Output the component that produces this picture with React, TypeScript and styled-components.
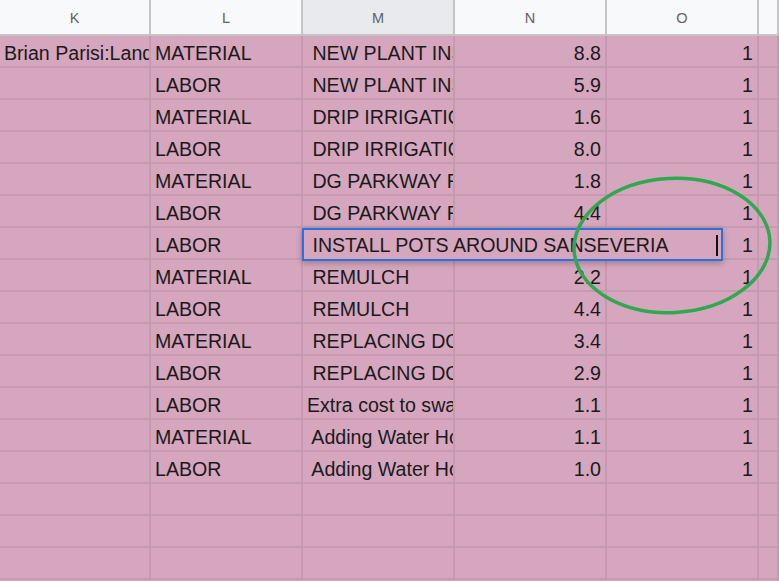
import React from "react";
import styled, { createGlobalStyle } from "styled-components";

const Global = createGlobalStyle`
  html, body { margin: 0; padding: 0; background: #d5a6bd; overflow: hidden; }
  body { font-family: "Liberation Sans", Arial, sans-serif; }
`;

const COLS = "151px 152px 152px 152px 152px 1fr";

const Sheet = styled.div`
  position: relative;
  width: 779px;
  height: 581px;
  overflow: hidden;
  background: #d5a6bd;
`;

const HeaderRow = styled.div`
  display: grid;
  grid-template-columns: ${COLS};
  height: 36px;
  box-sizing: border-box;
  border-bottom: 2px solid #c4c4c4;
  background: #f8f9fa;
`;

const HeaderCell = styled.div<{ $active?: boolean }>`
  display: flex;
  align-items: center;
  justify-content: center;
  box-sizing: border-box;
  border-right: 2px solid #c4c4c4;
  background: ${(p) => (p.$active ? "#e8eaed" : "#f8f9fa")};
  color: #5f6368;
  font-size: 14.5px;
  padding-top: 1px;
`;

const Row = styled.div`
  display: grid;
  grid-template-columns: ${COLS};
  height: 32px;
  box-sizing: border-box;
  border-bottom: 2px solid #c599af;
`;

const Cell = styled.div<{ $align?: "left" | "right" }>`
  box-sizing: border-box;
  border-right: 2px solid #c599af;
  display: flex;
  align-items: center;
  justify-content: ${(p) => (p.$align === "right" ? "flex-end" : "flex-start")};
  padding: 4px ${(p) => (p.$align === "right" ? "4px" : "0")} 0 ${(p) => (p.$align === "right" ? "0" : "4px")};
  font-size: 19.6px;
  color: #1a1a1a;
  white-space: pre;
  overflow: hidden;
`;

const FirstCell = styled(Cell)`
  padding-left: 4px;
`;

const Editor = styled.div`
  position: absolute;
  left: 302px;
  top: 228px;
  width: 421px;
  height: 33px;
  box-sizing: border-box;
  border: 2.5px solid #2f6fdc;
  background: #d5a6bd;
  box-shadow: 0 2px 6px rgba(60, 40, 60, 0.35);
  display: flex;
  align-items: center;
  padding: 2px 0 0 3px;
  font-size: 19.6px;
  color: #1a1a1a;
  white-space: pre;
`;

const Caret = styled.span`
  position: absolute;
  left: 412px;
  top: 5px;
  width: 1.5px;
  height: 21px;
  background: #111;
`;

const Annotation = styled.svg`
  position: absolute;
  left: 0;
  top: 0;
  pointer-events: none;
`;

type R = [string, string, string, string, string];

const rows: R[] = [
  ["Brian Parisi:Land", "MATERIAL", " NEW PLANT INSTALL", "8.8", "1"],
  ["", "LABOR", " NEW PLANT INSTALL", "5.9", "1"],
  ["", "MATERIAL", " DRIP IRRIGATION", "1.6", "1"],
  ["", "LABOR", " DRIP IRRIGATION", "8.0", "1"],
  ["", "MATERIAL", " DG PARKWAY REPAIR", "1.8", "1"],
  ["", "LABOR", " DG PARKWAY REPAIR", "4.4", "1"],
  ["", "LABOR", "", "", "1"],
  ["", "MATERIAL", " REMULCH", "2.2", "1"],
  ["", "LABOR", " REMULCH", "4.4", "1"],
  ["", "MATERIAL", " REPLACING DG", "3.4", "1"],
  ["", "LABOR", " REPLACING DG", "2.9", "1"],
  ["", "LABOR", "Extra cost to swap", "1.1", "1"],
  ["", "MATERIAL", " Adding Water Hose", "1.1", "1"],
  ["", "LABOR", " Adding Water Hose", "1.0", "1"],
  ["", "", "", "", ""],
  ["", "", "", "", ""],
  ["", "", "", "", ""],
];

export default function App() {
  return (
    <>
      <Global />
      <Sheet>
        <HeaderRow>
          <HeaderCell>K</HeaderCell>
          <HeaderCell>L</HeaderCell>
          <HeaderCell $active>M</HeaderCell>
          <HeaderCell>N</HeaderCell>
          <HeaderCell>O</HeaderCell>
          <HeaderCell />
        </HeaderRow>
        {rows.map((r, i) => (
          <Row key={i}>
            <FirstCell>{r[0]}</FirstCell>
            <Cell>{r[1]}</Cell>
            <Cell>{r[2]}</Cell>
            <Cell $align="right">{r[3]}</Cell>
            <Cell $align="right">{r[4]}</Cell>
            <Cell />
          </Row>
        ))}
        <Editor>
          {" INSTALL POTS AROUND SANSEVERIA"}
          <Caret />
        </Editor>
        <Annotation width="779" height="581" viewBox="0 0 779 581">
          <ellipse
            cx="672"
            cy="245.5"
            rx="98"
            ry="67"
            fill="none"
            stroke="#2fa84f"
            strokeWidth="3.5"
            transform="rotate(-3 672 245.5)"
          />
        </Annotation>
      </Sheet>
    </>
  );
}
